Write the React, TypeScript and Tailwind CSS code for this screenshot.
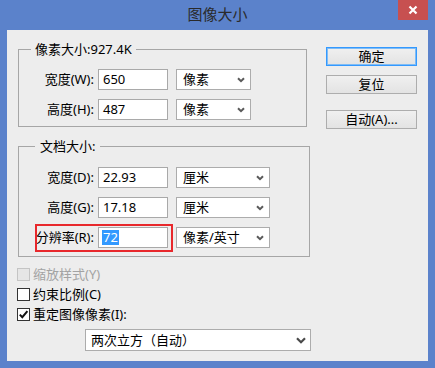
import React from "react";

const F = "font-['Noto_Sans','Noto_Sans_CJK_SC',sans-serif]";

function Chevron({ big = false }: { big?: boolean }) {
  return big ? (
    <svg width="10" height="7" viewBox="0 0 10 7" className="shrink-0">
      <path d="M1 1.2 L5 5.2 L9 1.2" stroke="#4a4a4a" strokeWidth="2.2" fill="none" />
    </svg>
  ) : (
    <svg width="8" height="6" viewBox="0 0 8 6" className="shrink-0">
      <path d="M1 1.2 L4 4.2 L7 1.2" stroke="#5a5a5a" strokeWidth="2" fill="none" />
    </svg>
  );
}

function Select({ text, w }: { text: string; w: string }) {
  return (
    <div
      className={`ml-[8px] flex h-[21px] ${w} items-center justify-between border border-[#acacac] bg-white pl-[6px] pr-[5px] text-[13px] leading-none text-black`}
    >
      <span>{text}</span>
      <Chevron />
    </div>
  );
}

function Row({
  label,
  value,
  unit,
  selW,
  selected = false,
}: {
  label: string;
  value: string;
  unit: string;
  selW: string;
  selected?: boolean;
}) {
  return (
    <div className="flex h-[21px] items-center">
      <div className="w-[75px] whitespace-nowrap text-right text-[13px] leading-none text-black">{label}</div>
      <div className="ml-[4px] flex h-[21px] w-[70px] items-center border border-[#a9a9a9] bg-white pl-[3px] text-[13px] leading-none text-black">
        {selected ? <span className="bg-[#3399ff] px-[1px] py-[1px] text-white">{value}</span> : <span className="pl-[1px]">{value}</span>}
      </div>
      <Select text={unit} w={selW} />
    </div>
  );
}

function Button({ text, primary = false, className = "" }: { text: React.ReactNode; primary?: boolean; className?: string }) {
  return (
    <div
      className={`flex h-[19px] w-[91px] items-center justify-center border bg-gradient-to-b from-[#f0f0f0] to-[#e3e3e3] text-[13px] leading-none text-black ${
        primary ? "border-[#3399ff] shadow-[inset_0_0_0_1px_#7fbcf5]" : "border-[#adadad]"
      } ${className}`}
    >
      {text}
    </div>
  );
}

function Checkbox({ label, checked = false, disabled = false }: { label: React.ReactNode; checked?: boolean; disabled?: boolean }) {
  return (
    <div className="flex h-[20px] items-center">
      <div
        className={`flex h-[13px] w-[13px] items-center justify-center border ${
          disabled ? "border-[#c4c4c4] bg-[#e6e6e6]" : "border-[#333333] bg-white"
        }`}
      >
        {checked && (
          <svg width="11" height="11" viewBox="0 0 11 11">
            <path d="M1.8 5.6 L4.3 8.2 L9.4 2.2" stroke="#111" strokeWidth="2" fill="none" />
          </svg>
        )}
      </div>
      <span className={`ml-[3px] text-[13px] leading-none ${disabled ? "text-[#a3a3a3]" : "text-black"}`}>{label}</span>
    </div>
  );
}

export default function App() {
  return (
    <div className={`${F} flex h-[368px] w-[435px] flex-col bg-[#5b82cb]`}>
      <div className="relative flex h-[30px] shrink-0 items-center justify-center">
        <span className="pb-[1px] text-[15px] leading-none text-[#2a2a2a]">图像大小</span>
        <div className="absolute right-[7px] top-0 flex h-[20px] w-[30px] items-center justify-center bg-[#c75050]">
          <svg width="10" height="10" viewBox="0 0 10 10">
            <path d="M1.5 1.5 L8.5 8.5 M8.5 1.5 L1.5 8.5" stroke="#fff" strokeWidth="2.2" />
          </svg>
        </div>
      </div>
      <div className="mx-[7px] mb-[7px] flex flex-1 bg-[#ededed]">
        <div className="flex w-[303px] flex-col pl-[10px]">
          <fieldset className="ml-[1px] mt-[11px] w-[289px] border border-[#a6a6a6] px-0 pb-[6px] pt-[12px]">
            <legend className="ml-[12px] h-[16px] px-[4px] text-[13px] leading-[16px] text-black">像素大小:927.4K</legend>
            <div className="flex flex-col gap-[9px]">
              <Row label="宽度(W):" value="650" unit="像素" selW="w-[75px]" />
              <Row label="高度(H):" value="487" unit="像素" selW="w-[75px]" />
            </div>
          </fieldset>
          <fieldset className="ml-[1px] mt-[11px] w-[292px] border border-[#a6a6a6] px-0 pb-[8px] pt-[13px]">
            <legend className="ml-[16px] h-[16px] px-[5px] text-[13px] leading-[16px] text-black">文档大小:</legend>
            <div className="flex flex-col gap-[9px]">
              <Row label="宽度(D):" value="22.93" unit="厘米" selW="w-[94px]" />
              <Row label="高度(G):" value="17.18" unit="厘米" selW="w-[94px]" />
              <div className="relative">
                <Row label="分辨率(R):" value="72" unit="像素/英寸" selW="w-[94px]" selected />
                <div className="absolute left-[16px] top-[-3px] h-[28px] w-[138px] border-2 border-[#e8282c]" />
              </div>
            </div>
          </fieldset>
          <div className="mt-[7px] flex flex-col">
            <Checkbox label="缩放样式(Y)" disabled />
            <Checkbox label="约束比例(C)" />
            <Checkbox label="重定图像像素(I):" checked />
          </div>
          <div className="ml-[68px] mt-[5px] flex h-[22px] w-[226px] items-center justify-between border border-[#acacac] bg-white pl-[5px] pr-[4px] text-[13px] leading-none text-black">
            <span>两次立方（自动）</span>
            <Chevron big />
          </div>
        </div>
        <div className="ml-[16px] mt-[17px] flex flex-col">
          <Button text="确定" primary />
          <Button text="复位" className="mt-[9px]" />
          <Button text="自动(A)..." className="mt-[16px]" />
        </div>
      </div>
    </div>
  );
}
